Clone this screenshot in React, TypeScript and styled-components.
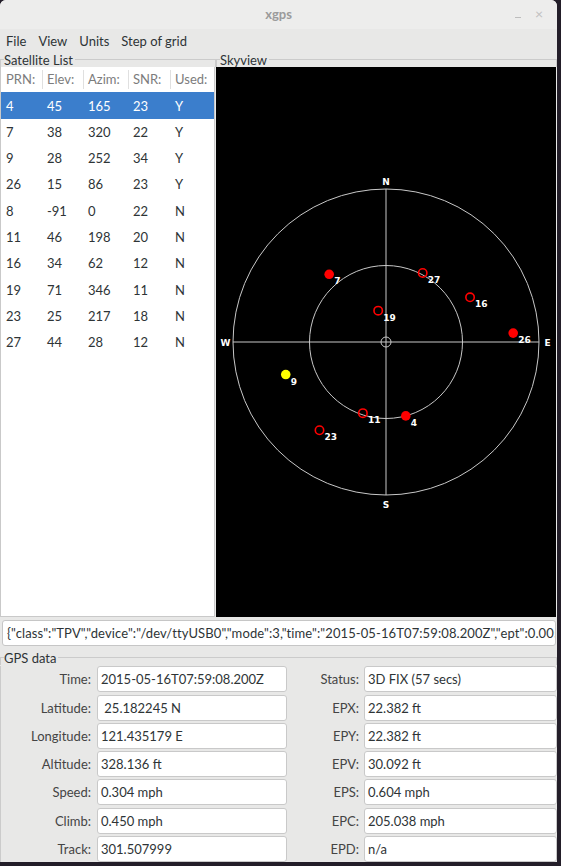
import React from "react";
import styled, { createGlobalStyle } from "styled-components";

const GlobalStyle = createGlobalStyle`
  html, body {
    margin: 0;
    padding: 0;
    background: #231e29;
  }
  body {
    font-family: Lato, "Open Sans", sans-serif;
  }
`;

interface Sat {
  prn: number;
  elev: number;
  azim: number;
  snr: number;
  used: boolean;
}

const sats: Sat[] = [
  { prn: 4, elev: 45, azim: 165, snr: 23, used: true },
  { prn: 7, elev: 38, azim: 320, snr: 22, used: true },
  { prn: 9, elev: 28, azim: 252, snr: 34, used: true },
  { prn: 26, elev: 15, azim: 86, snr: 23, used: true },
  { prn: 8, elev: -91, azim: 0, snr: 22, used: false },
  { prn: 11, elev: 46, azim: 198, snr: 20, used: false },
  { prn: 16, elev: 34, azim: 62, snr: 12, used: false },
  { prn: 19, elev: 71, azim: 346, snr: 11, used: false },
  { prn: 23, elev: 25, azim: 217, snr: 18, used: false },
  { prn: 27, elev: 44, azim: 28, snr: 12, used: false },
];

const leftData: [string, string][] = [
  ["Time:", "2015-05-16T07:59:08.200Z"],
  ["Latitude:", "\u00a025.182245 N"],
  ["Longitude:", "121.435179 E"],
  ["Altitude:", "328.136 ft"],
  ["Speed:", "0.304 mph"],
  ["Climb:", "0.450 mph"],
  ["Track:", "301.507999"],
];

const rightData: [string, string][] = [
  ["Status:", "3D FIX (57 secs)"],
  ["EPX:", "22.382 ft"],
  ["EPY:", "22.382 ft"],
  ["EPV:", "30.092 ft"],
  ["EPS:", "0.604 mph"],
  ["EPC:", "205.038 mph"],
  ["EPD:", "n/a"],
];

const json =
  '{"class":"TPV","device":"/dev/ttyUSB0","mode":3,"time":"2015-05-16T07:59:08.200Z","ept":0.005,"lat":25.182245,"lon":121.435179,"alt":100.016}';

const Window = styled.div`
  width: 557px;
  height: 862px;
  background: #e8e8e7;
  border-radius: 6px 6px 0 0;
  display: flex;
  flex-direction: column;
  overflow: hidden;
  color: #2e3436;
  font-size: 13px;
`;

const TitleBar = styled.div`
  height: 29px;
  display: flex;
  align-items: center;
  background: #ededec;
`;

const TitleSide = styled.div`
  width: 42px;
  height: 100%;
  display: flex;
  align-items: center;
  gap: 14px;
`;

const Title = styled.div`
  flex: 1;
  text-align: center;
  color: #9b9b9b;
  font-size: 13px;
  font-weight: bold;
`;

const Minimize = styled.span`
  width: 6px;
  height: 1px;
  margin-top: 7px;
  background: #bdbdbd;
`;

const Close = styled.span`
  color: #c0c0c0;
  font-size: 14px;
  line-height: 1;
`;

const MenuBar = styled.div`
  height: 24px;
  display: flex;
  align-items: center;
`;

const MenuItem = styled.span`
  padding: 0 6px;
  font-size: 13px;
  color: #2e3436;
`;

const MainRow = styled.div`
  display: flex;
  height: 565px;
`;

const Frame = styled.section<{ $width?: number }>`
  display: flex;
  flex-direction: column;
  width: ${(p) => (p.$width ? `${p.$width}px` : "auto")};
  flex: ${(p) => (p.$width ? "none" : "1")};
  min-width: 0;
`;

const FrameTitle = styled.div`
  height: 15px;
  display: flex;
  align-items: center;
  font-size: 13px;
  color: #2e3436;
  &::before {
    content: "";
    width: 3px;
    align-self: flex-end;
    height: 7px;
    border-top: 1px solid #cbcbcb;
    border-left: 1px solid #cbcbcb;
  }
  &::after {
    content: "";
    flex: 1;
    align-self: flex-end;
    height: 7px;
    margin-left: 2px;
    border-top: 1px solid #cbcbcb;
    border-right: 1px solid #cbcbcb;
  }
`;

const ListBox = styled.div`
  flex: 1;
  background: #ffffff;
  border: 1px solid #c9c9c9;
  border-top: none;
  margin-right: 1px;
`;

const SatRow = styled.div<{ $header?: boolean; $selected?: boolean }>`
  display: grid;
  grid-template-columns: 41px 41px 45px 42px 1fr;
  height: ${(p) => (p.$header ? "25px" : "26.3px")};
  align-items: center;
  background: ${(p) => (p.$selected ? "#3b7ecc" : "transparent")};
  color: ${(p) => (p.$header ? "#7c7c7c" : p.$selected ? "#ffffff" : "#2e3436")};
  font-size: 13px;
`;

const HeadCell = styled.div`
  height: 19px;
  line-height: 19px;
  padding-left: 5px;
  & + & {
    border-left: 1px solid #e0e0e0;
    padding-left: 4px;
  }
`;

const Cell = styled.div`
  padding-left: 5px;
`;

const SkyBox = styled.div`
  flex: 1;
  background: #000000;
  margin-right: 1px;
  display: flex;
`;

const JsonEntry = styled.div`
  margin: 3px 1px 0 2px;
  height: 26px;
  box-sizing: border-box;
  border: 1px solid #c6c6c6;
  border-radius: 3px;
  background: #ffffff;
  padding: 0 4px;
  line-height: 24px;
  font-size: 13px;
  letter-spacing: 0.1px;
  white-space: nowrap;
  overflow: hidden;
`;

const GpsFrame = styled.section`
  margin-top: 4px;
  display: flex;
  flex-direction: column;
`;

const DataGrid = styled.div`
  display: grid;
  grid-template-columns: 96px 190px 77px 193px;
  grid-auto-rows: 26px;
  row-gap: 2.3px;
  margin-top: 1px;
  border-left: 1px solid #cbcbcb;
`;

const DataLabel = styled.div<{ $pad: number }>`
  text-align: right;
  padding-right: ${(p) => p.$pad}px;
  line-height: 26px;
  font-size: 13px;
  color: #444444;
`;

const DataValue = styled.div`
  box-sizing: border-box;
  border: 1px solid #c9c9c9;
  border-radius: 3px;
  background: #ffffff;
  padding-left: 3px;
  line-height: 24px;
  font-size: 13px;
  white-space: nowrap;
  overflow: hidden;
`;

const W = 340;
const H = 550;
const CX = 170;
const CY = 275;
const R = 153;

function satColor(s: Sat) {
  if (s.snr < 30) return "#ff0000";
  if (s.snr < 35) return "#ffff00";
  return "#00ff00";
}

const Skyview: React.FC = () => {
  const line = "#c8c8c8";
  const labelStyle = {
    fill: "#ffffff",
    fontFamily: '"DejaVu Sans", sans-serif',
    fontWeight: 700,
    fontSize: 9,
  } as const;
  return (
    <svg width={W} height={H} viewBox={`0 0 ${W} ${H}`}>
      <circle cx={CX} cy={CY} r={R} fill="none" stroke={line} strokeWidth={1} />
      <circle cx={CX} cy={CY} r={R / 2} fill="none" stroke={line} strokeWidth={1} />
      <circle cx={CX} cy={CY} r={5} fill="none" stroke={line} strokeWidth={1} />
      <line x1={CX - R} y1={CY} x2={CX + R} y2={CY} stroke={line} />
      <line x1={CX} y1={CY - R} x2={CX} y2={CY + R} stroke={line} />
      <text x={CX} y={CY - R - 4.5} textAnchor="middle" style={labelStyle}>N</text>
      <text x={CX} y={CY + R + 12.5} textAnchor="middle" style={labelStyle}>S</text>
      <text x={9.5} y={CY + 3.5} textAnchor="middle" style={labelStyle}>W</text>
      <text x={331.5} y={CY + 3.5} textAnchor="middle" style={labelStyle}>E</text>
      {sats
        .filter((s) => s.elev >= 0)
        .map((s) => {
          const r = ((90 - s.elev) / 90) * R;
          const a = (s.azim * Math.PI) / 180;
          const x = CX + r * Math.sin(a);
          const y = CY - r * Math.cos(a);
          const c = satColor(s);
          return (
            <g key={s.prn}>
              <circle
                cx={x}
                cy={y}
                r={s.used ? 4.8 : 4.2}
                fill={s.used ? c : "none"}
                stroke={c}
                strokeWidth={s.used ? 0 : 1.6}
              />
              <text x={x + 5} y={y + 10} style={labelStyle}>
                {s.prn}
              </text>
            </g>
          );
        })}
    </svg>
  );
};

export default function App() {
  return (
    <>
      <GlobalStyle />
      <Window>
        <TitleBar>
          <TitleSide />
          <Title>xgps</Title>
          <TitleSide>
            <Minimize />
            <Close>×</Close>
          </TitleSide>
        </TitleBar>
        <MenuBar>
          <MenuItem>File</MenuItem>
          <MenuItem>View</MenuItem>
          <MenuItem>Units</MenuItem>
          <MenuItem>Step of grid</MenuItem>
        </MenuBar>
        <MainRow>
          <Frame $width={216}>
            <FrameTitle>Satellite List</FrameTitle>
            <ListBox>
              <SatRow $header>
                <HeadCell>PRN:</HeadCell>
                <HeadCell>Elev:</HeadCell>
                <HeadCell>Azim:</HeadCell>
                <HeadCell>SNR:</HeadCell>
                <HeadCell>Used:</HeadCell>
              </SatRow>
              {sats.map((s, i) => (
                <SatRow key={s.prn} $selected={i === 0}>
                  <Cell>{s.prn}</Cell>
                  <Cell>{s.elev}</Cell>
                  <Cell>{s.azim}</Cell>
                  <Cell>{s.snr}</Cell>
                  <Cell>{s.used ? "Y" : "N"}</Cell>
                </SatRow>
              ))}
            </ListBox>
          </Frame>
          <Frame>
            <FrameTitle>Skyview</FrameTitle>
            <SkyBox>
              <Skyview />
            </SkyBox>
          </Frame>
        </MainRow>
        <JsonEntry>{json}</JsonEntry>
        <GpsFrame>
          <FrameTitle>GPS data</FrameTitle>
          <DataGrid>
            {leftData.map(([l, v], i) => (
              <React.Fragment key={l}>
                <DataLabel $pad={6}>{l}</DataLabel>
                <DataValue>{v}</DataValue>
                <DataLabel $pad={5}>{rightData[i][0]}</DataLabel>
                <DataValue>{rightData[i][1]}</DataValue>
              </React.Fragment>
            ))}
          </DataGrid>
        </GpsFrame>
      </Window>
    </>
  );
}
